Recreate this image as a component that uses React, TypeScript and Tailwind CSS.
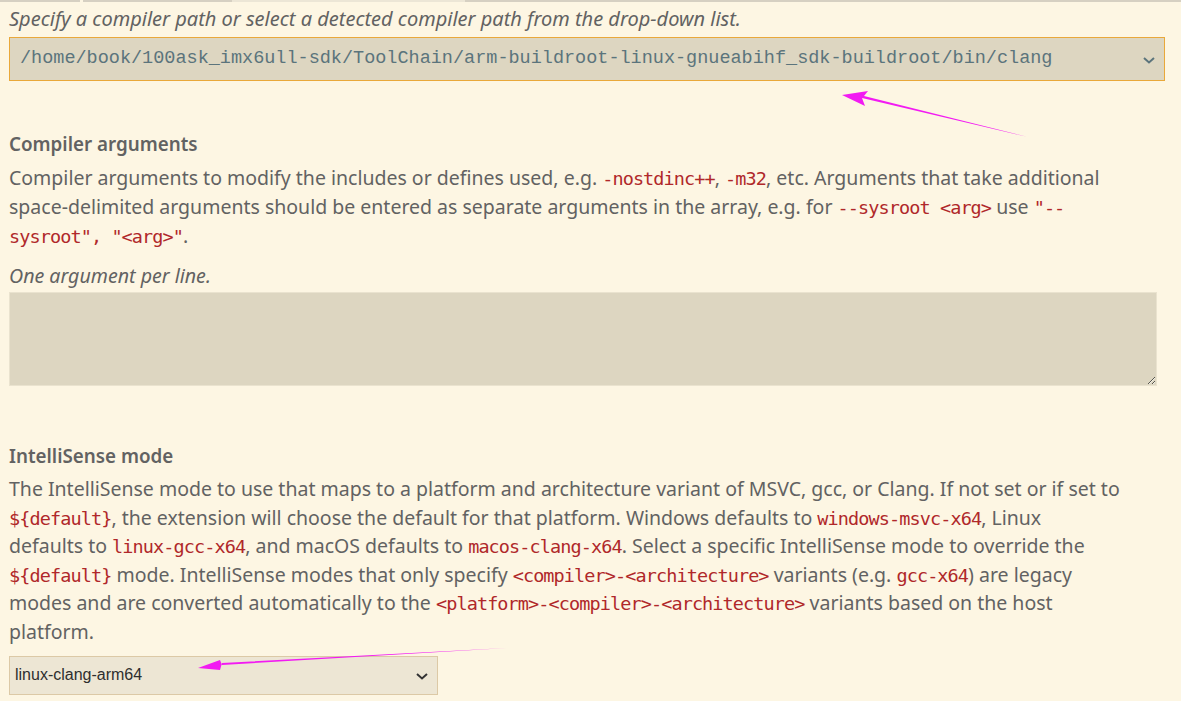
import React from "react";

const Code = ({ children }: { children: React.ReactNode }) => (
  <code className="font-['DejaVu_Sans_Mono',monospace] text-[18.5px] tracking-[-0.9px] leading-none text-[#b0282a]">{children}</code>
);

const Chevron = ({ className }: { className: string }) => (
  <svg className={className} width="14" height="10" viewBox="0 0 14 10" fill="none">
    <path d="M2 3 L7 7.5 L12 3" stroke="currentColor" strokeWidth="2" />
  </svg>
);

export default function App() {
  return (
    <div className="relative w-[1181px] h-[701px] overflow-hidden bg-[#fdf6e3] font-['Noto_Sans',sans-serif] text-[#626262]">
      <div className="flex h-[2px]">
        <div className="w-[80px] bg-[#d6d0c2]" />
        <div className="w-[3px]" />
        <div className="w-[149px] bg-[#d6d0c2]" />
        <div className="w-[233px] bg-[#ece6d6]" />
        <div className="flex-1 bg-[#d6d0c2]" />
      </div>
      <div className="pl-[9px] pr-[16px]">
        <p className="mt-[4px] italic text-[20px] leading-[26px] whitespace-nowrap">
          Specify a compiler path or select a detected compiler path from the drop-down list.
        </p>
        <div className="relative mt-[5px] h-[44px] border border-[#e9a83a] bg-[#ddd6c1] flex items-center">
          <span className="pl-[10px] font-['Liberation_Mono',monospace] text-[18.5px] text-[#5b747c] whitespace-nowrap">
            /home/book/100ask_imx6ull-sdk/ToolChain/arm-buildroot-linux-gnueabihf_sdk-buildroot/bin/clang
          </span>
          <Chevron className="absolute right-[8px] top-[17px] text-[#5b747c]" />
        </div>

        <h3 className="mt-[50px] text-[18.8px] font-semibold leading-[26px]">Compiler arguments</h3>
        <p className="mt-[6px] text-[19.5px] leading-[29px] whitespace-nowrap">
          Compiler arguments to modify the includes or defines used, e.g. <Code>-nostdinc++</Code>, <Code>-m32</Code>, etc. Arguments that take additional
          <br />
          space-delimited arguments should be entered as separate arguments in the array, e.g. for <Code>--sysroot &lt;arg&gt;</Code> use <Code>"--</Code>
          <br />
          <Code>sysroot", "&lt;arg&gt;"</Code>.
        </p>
        <p className="mt-[14px] italic text-[19.6px] leading-[24px] whitespace-nowrap">One argument per line.</p>
        <textarea
          className="mt-[4px] block w-[1148px] h-[94px] bg-[#ddd6c1] border border-[#eae3cf] outline-none"
          defaultValue=""
        />

        <h3 className="mt-[57px] text-[18.8px] font-semibold leading-[26px]">IntelliSense mode</h3>
        <p className="mt-[6px] text-[19.5px] leading-[28.6px] whitespace-nowrap">
          The IntelliSense mode to use that maps to a platform and architecture variant of MSVC, gcc, or Clang. If not set or if set to
          <br />
          <Code>{"${default}"}</Code>, the extension will choose the default for that platform. Windows defaults to <Code>windows-msvc-x64</Code>, Linux
          <br />
          defaults to <Code>linux-gcc-x64</Code>, and macOS defaults to <Code>macos-clang-x64</Code>. Select a specific IntelliSense mode to override the
          <br />
          <Code>{"${default}"}</Code> mode. IntelliSense modes that only specify <Code>&lt;compiler&gt;-&lt;architecture&gt;</Code> variants (e.g. <Code>gcc-x64</Code>) are legacy
          <br />
          modes and are converted automatically to the <Code>&lt;platform&gt;-&lt;compiler&gt;-&lt;architecture&gt;</Code> variants based on the host
          <br />
          platform.
        </p>
        <div className="relative mt-[9px] w-[429px] h-[39px] border border-[#dcc9a6] bg-[#ede6d4] flex items-center">
          <span className="pl-[5px] font-['Liberation_Sans',sans-serif] text-[16px] text-[#2e2e2e]">linux-clang-arm64</span>
          <Chevron className="absolute right-[8px] top-[14px] text-[#333333]" />
        </div>
      </div>

      <svg className="absolute inset-0 pointer-events-none" width="1181" height="701" viewBox="0 0 1181 701">
        <polygon points="1028,137 862,98 865,106 842,95 868,91 864,96" fill="#f21bf2" />
        <polygon points="507,648 222,663 220,670 198,668 220,660 222,665" fill="#f21bf2" />
      </svg>
    </div>
  );
}
